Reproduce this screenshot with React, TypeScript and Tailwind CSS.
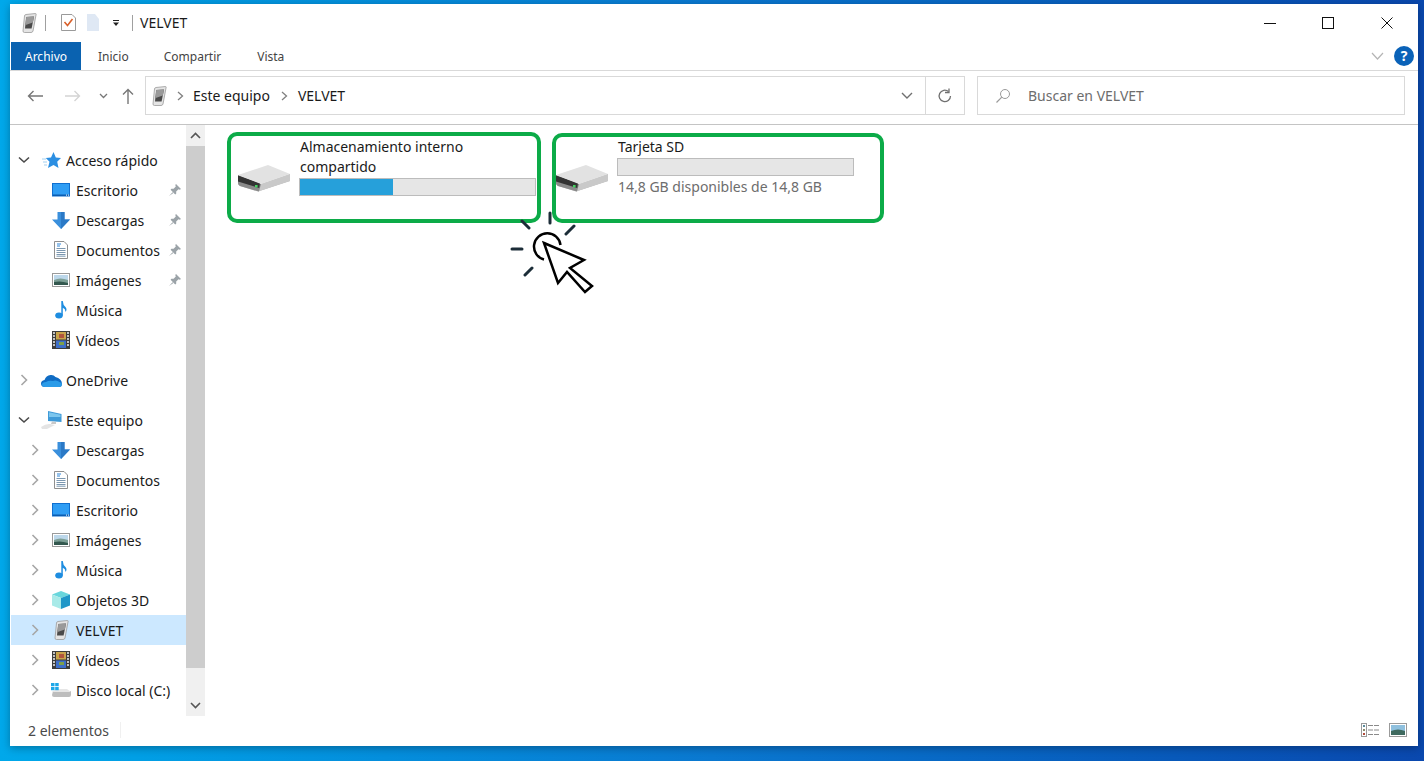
import { ReactNode } from 'react';

const font = "font-['Noto_Sans','Open_Sans',sans-serif]";

function Phone({ size = 20 }: { size?: number }) {
    return (
        <svg width={size * 0.75} height={size} viewBox="0 0 15 20">
            <path d="M4 1.5 L13.5 0.5 Q14.5 0.5 14 2 L11 18 Q10.5 19.5 9 19.5 L2.5 19.5 Q1 19.5 1 18 L2.5 3 Q2.5 1.7 4 1.5Z" fill="#e4e4e4" stroke="#9a9a9a" strokeWidth="0.8" />
            <path d="M4.2 4 L12 3.5 L9.6 15.5 L3 15.5Z" fill="#4a4a4a" />
            <path d="M4.2 4 L12 3.5 L10.8 9.5 L3.6 12Z" fill="#9a9a9a" />
        </svg>
    );
}

function DesktopIcon() {
    return (
        <svg width="18" height="14" viewBox="0 0 18 14">
            <rect x="0" y="0" width="18" height="13.5" fill="#0f6fd0" />
            <rect x="1" y="1" width="16" height="11" fill="#2f9df4" />
            <rect x="1" y="11.5" width="16" height="1.5" fill="#0b5cb0" />
            <rect x="14" y="11.6" width="1" height="1" fill="#fff" />
            <rect x="16" y="11.6" width="1" height="1" fill="#fff" />
        </svg>
    );
}

function DownloadIcon() {
    return (
        <svg width="18" height="17" viewBox="0 0 18 17">
            <path d="M5.5 0 H12.5 V7.5 H18 L9 17 L0 7.5 H5.5Z" fill="#3a8fdc" />
            <path d="M9 0 H12.5 V7.5 H18 L9 17Z" fill="#2b79c6" />
        </svg>
    );
}

function DocIcon() {
    return (
        <svg width="14" height="18" viewBox="0 0 14 18">
            <path d="M0.5 0.5 H10 L13.5 4 V17.5 H0.5Z" fill="#fff" stroke="#8f8f8f" />
            <path d="M3 3 H7 M3 5 H6" stroke="#2f86d8" strokeWidth="1" />
            <path d="M2.5 7.5 H11.5 M2.5 9.5 H11.5 M2.5 11.5 H11.5 M2.5 13.5 H11.5 M2.5 15.2 H11.5" stroke="#6d8ca8" strokeWidth="0.9" />
        </svg>
    );
}

function PictureIcon() {
    return (
        <svg width="18" height="14" viewBox="0 0 18 14">
            <rect x="0.5" y="0.5" width="17" height="13" fill="#fff" stroke="#9a9a9a" />
            <rect x="2" y="2" width="14" height="10" fill="#bcd7ea" />
            <path d="M2 7 Q8 4 16 7 V12 H2Z" fill="#7c9f96" />
            <path d="M2 9 Q9 7.5 16 10 V12 H2Z" fill="#33584f" />
        </svg>
    );
}

function MusicIcon() {
    return (
        <svg width="12" height="18" viewBox="0 0 12 18">
            <ellipse cx="4" cy="14.5" rx="3.8" ry="3" fill="#1e8de0" />
            <path d="M6.3 0 H7.8 Q8 4 10.5 6 Q12.5 8.5 10.5 11 Q10.6 8 7.8 6.8 V14.5 H6.3Z" fill="#1e8de0" />
        </svg>
    );
}

function VideoIcon() {
    return (
        <svg width="18" height="18" viewBox="0 0 18 18">
            <rect width="18" height="18" fill="#3c3c3c" />
            <rect x="4" y="1" width="10" height="7.5" fill="#c8a34a" />
            <rect x="7" y="3" width="5" height="4" fill="#b0553d" />
            <rect x="4" y="9.5" width="10" height="7.5" fill="#3e6fc9" />
            <rect x="7" y="11" width="5" height="3" fill="#7ea04a" />
            <path d="M1 2 H3 M1 5 H3 M1 8 H3 M1 11 H3 M1 14 H3 M15 2 H17 M15 5 H17 M15 8 H17 M15 11 H17 M15 14 H17" stroke="#eee" strokeWidth="1.4" />
        </svg>
    );
}

function StarIcon() {
    return (
        <svg width="19" height="17" viewBox="0 0 19 17">
            <path d="M11.5 0 L13.8 5.5 L19 6 L15.2 9.8 L16.5 16 L11.5 13 L6 16 L7.5 9.8 L3.8 6 L9 5.5Z" fill="#2c8fe2" />
            <path d="M0 7 H4 M1 10 H5 M2 13 H5" stroke="#8cc4ee" strokeWidth="0.8" />
        </svg>
    );
}

function CloudIcon() {
    return (
        <svg width="21" height="13" viewBox="0 0 21 13">
            <path d="M4 13 Q0 13 0 9.5 Q0 6.5 3.5 6 Q5 1.5 9.5 1 Q12.5 0.5 14.5 3 Q20.5 4.5 21 9.5 Q21 13 18 13Z" fill="#0f6cc4" />
            <path d="M4 13 Q1 13 1 10.5 Q1 8 5 8 Q8 6 12 7 Q15 5 21 9.5 Q21 13 18 13Z" fill="#2a9be8" />
        </svg>
    );
}

function PcIcon() {
    return (
        <svg width="21" height="18" viewBox="0 0 21 18">
            <path d="M7 0 L20.5 3 V11 L7 10Z" fill="#3f9ad8" />
            <path d="M8 1.2 L19.5 3.8 V6 L8 6Z" fill="#7cc6ee" />
            <path d="M11 10.5 L15 11 L15 13 L10 13Z" fill="#c9c9c9" />
            <path d="M0 16 Q5 12.5 9 13 L14 14 L6 18 L1 18Z" fill="#e4e4e4" />
        </svg>
    );
}

function CubeIcon() {
    return (
        <svg width="18" height="18" viewBox="0 0 18 18">
            <path d="M9 0 L18 3.5 L9 7 L0 3.5Z" fill="#69d6dc" />
            <path d="M0 3.5 L9 7 V18 L0 14.5Z" fill="#a8eae8" />
            <path d="M18 3.5 L9 7 V18 L18 14.5Z" fill="#1f97c8" />
        </svg>
    );
}

function LocalDiskIcon() {
    return (
        <svg width="20" height="14" viewBox="0 0 20 14">
            <path d="M2 8 L20 8 V12 Q20 14 18 14 H3 Q1 14 1 12Z" fill="#bdbdbd" />
            <path d="M5 6 H16 L20 9 H1Z" fill="#e6e6e6" />
            <rect x="0" y="0" width="3.5" height="3.2" fill="#1ea7e8" />
            <rect x="4.2" y="0" width="3.5" height="3.2" fill="#1ea7e8" />
            <rect x="0" y="4" width="3.5" height="3.2" fill="#1ea7e8" />
            <rect x="4.2" y="4" width="3.5" height="3.2" fill="#1ea7e8" />
        </svg>
    );
}

function Pin() {
    return (
        <svg width="12" height="12" viewBox="0 0 12 12">
            <path d="M7 0 L12 5 L10.8 5.8 L9.5 5.3 L7.2 7.6 L7.2 9.8 L6.2 10.6 L1.6 5.8 L2.4 4.8 L4.6 4.8 L6.8 2.5 L6.3 1Z" fill="#9ba3a8" />
            <path d="M3.6 8.2 L0 12 L4.4 9Z" fill="#9ba3a8" />
        </svg>
    );
}

function Chevron({ open }: { open?: boolean }) {
    return open ? (
        <svg width="12" height="8" viewBox="0 0 12 8"><path d="M1 1.5 L6 6 L11 1.5" fill="none" stroke="#4a4a4a" strokeWidth="1.6" /></svg>
    ) : (
        <svg width="8" height="12" viewBox="0 0 8 12"><path d="M1.5 1 L6.5 6 L1.5 11" fill="none" stroke="#a6a6a6" strokeWidth="1.6" /></svg>
    );
}

function DriveIcon() {
    return (
        <svg width="52" height="27" viewBox="0 0 52 27" className="shrink-0">
            <path d="M0 10 L23 19 L52 9 V16 L20 26.5 L2 21 Q0 20 0 18Z" fill="#b9b9b9" />
            <path d="M23 19 L52 9 V16 L20 26.5Z" fill="#c9c9c9" />
            <path d="M0 10 L23 19 L21 26.5 L2 21 Q0 20 0 18Z" fill="#8a8a8a" />
            <path d="M0 10.5 L22 18 L21.2 23 L0 16.5Z" fill="#333" />
            <path d="M0 10 L30 0 L52 9 L23 19Z" fill="#e2e2e2" />
            <rect x="17" y="20" width="2.6" height="2.4" fill="#45d160" />
        </svg>
    );
}

type NavItem = { label: string; icon: ReactNode; pin?: boolean; sel?: boolean };

const quick: NavItem[] = [
    { label: 'Escritorio', icon: <DesktopIcon />, pin: true },
    { label: 'Descargas', icon: <DownloadIcon />, pin: true },
    { label: 'Documentos', icon: <DocIcon />, pin: true },
    { label: 'Imágenes', icon: <PictureIcon />, pin: true },
    { label: 'Música', icon: <MusicIcon /> },
    { label: 'Vídeos', icon: <VideoIcon /> },
];

const pc: NavItem[] = [
    { label: 'Descargas', icon: <DownloadIcon /> },
    { label: 'Documentos', icon: <DocIcon /> },
    { label: 'Escritorio', icon: <DesktopIcon /> },
    { label: 'Imágenes', icon: <PictureIcon /> },
    { label: 'Música', icon: <MusicIcon /> },
    { label: 'Objetos 3D', icon: <CubeIcon /> },
    { label: 'VELVET', icon: <Phone size={20} />, sel: true },
    { label: 'Vídeos', icon: <VideoIcon /> },
    { label: 'Disco local (C:)', icon: <LocalDiskIcon /> },
];

function TopRow({ label, icon, open }: { label: string; icon: ReactNode; open?: boolean }) {
    return (
        <div className="flex h-[30px] items-center">
            <div className="flex w-[26px] justify-center">
                <Chevron open={open} />
            </div>
            <div className="ml-[3px] flex w-[22px] justify-center">{icon}</div>
            <span className="ml-[4px] text-[14px] text-[#1a1a1a]">{label}</span>
        </div>
    );
}

function ChildRow({ item, chevron }: { item: NavItem; chevron?: boolean }) {
    return (
        <div className={`flex h-[30px] items-center ${item.sel ? 'bg-[#cce8ff]' : ''}`}>
            <div className="ml-[11px] flex w-[26px] justify-center">{chevron && <Chevron />}</div>
            <div className="ml-[2px] flex w-[22px] justify-center">{item.icon}</div>
            <span className="ml-[4px] flex-1 text-[14px] text-[#1a1a1a]">{item.label}</span>
            {item.pin && (
                <div className="mr-[5px]">
                    <Pin />
                </div>
            )}
        </div>
    );
}

function Bar({ pct }: { pct: number }) {
    return (
        <div className="h-[18px] w-[237px] border border-[#bcbcbc] bg-[#e6e6e6]">
            {pct > 0 && <div className="h-full bg-[#26a0da]" style={{ width: `${pct}%` }} />}
        </div>
    );
}

export default function App() {
    return (
        <div className={`h-[761px] w-[1424px] overflow-hidden bg-gradient-to-r from-[#00a8ea] via-[#0a78d0] to-[#0a48ae] pl-[10px] pt-[4px] ${font}`}>
            <div className="relative flex h-[742px] w-[1408px] flex-col bg-white shadow-[0_2px_8px_rgba(0,0,0,0.3)]">
                {/* titulo */}
                <div className="flex h-[37px] items-center">
                    <div className="ml-[12px]"><Phone size={20} /></div>
                    <div className="ml-[8px] h-[16px] w-px bg-[#a0a0a0]" />
                    <svg width="15" height="17" viewBox="0 0 15 17" className="ml-[15px]">
                        <path d="M0.5 0.5 H11 L14.5 4 V16.5 H0.5Z" fill="#fff" stroke="#9a9a9a" />
                        <path d="M3.5 8 L6.5 11.5 L11.5 5" fill="none" stroke="#d9602a" strokeWidth="1.6" />
                    </svg>
                    <svg width="12" height="17" viewBox="0 0 12 17" className="ml-[11px]">
                        <path d="M0 0 H8 L12 5 V17 H0Z" fill="#dfe8f4" />
                    </svg>
                    <svg width="8" height="6" viewBox="0 0 8 6" className="ml-[13px]">
                        <path d="M1 0.5 H7" stroke="#222" />
                        <path d="M1 2.5 H7 L4 6Z" fill="#222" />
                    </svg>
                    <div className="ml-[12px] h-[16px] w-px bg-[#a0a0a0]" />
                    <span className="ml-[7px] text-[14px] text-[#1a1a1a]">VELVET</span>
                    <div className="ml-auto flex items-center">
                        <svg width="12" height="12" viewBox="0 0 12 12"><path d="M0 6.5 H12" stroke="#111" /></svg>
                        <svg width="12" height="12" viewBox="0 0 12 12" className="ml-[46px]"><rect x="0.5" y="0.5" width="11" height="11" fill="none" stroke="#111" /></svg>
                        <svg width="12" height="12" viewBox="0 0 12 12" className="ml-[47px] mr-[25px]"><path d="M0.5 0.5 L11.5 11.5 M11.5 0.5 L0.5 11.5" stroke="#111" /></svg>
                    </div>
                </div>

                {/* cinta */}
                <div className="flex h-[30px] items-stretch border-b border-[#d9d9d9] pl-px text-[12px] text-[#444]">
                    <div className="mt-px flex w-[70px] items-center justify-center bg-[#0a62b0] pt-px text-white">Archivo</div>
                    <div className="ml-[17px] flex items-center pt-[2px]">Inicio</div>
                    <div className="ml-[35px] flex items-center pt-[2px]">Compartir</div>
                    <div className="ml-[36px] flex items-center pt-[2px]">Vista</div>
                    <div className="ml-auto flex items-center">
                        <svg width="13" height="8" viewBox="0 0 13 8"><path d="M1 1 L6.5 7 L12 1" fill="none" stroke="#b5b5b5" strokeWidth="1.2" /></svg>
                        <div className="ml-[10px] mr-[4px] flex h-[20px] w-[20px] items-center justify-center rounded-full bg-[#0a62b8] text-[14px] font-bold text-white">?</div>
                    </div>
                </div>

                {/* direccion */}
                <div className="flex h-[54px] items-center border-b border-[#c4c4c4] pb-[4px]">
                    <svg width="16" height="12" viewBox="0 0 16 12" className="ml-[17px]"><path d="M16 6 H1.5 M6.5 1 L1.5 6 L6.5 11" fill="none" stroke="#777" strokeWidth="1.4" /></svg>
                    <svg width="16" height="12" viewBox="0 0 16 12" className="ml-[22px]"><path d="M0 6 H14.5 M9.5 1 L14.5 6 L9.5 11" fill="none" stroke="#d4d4d4" strokeWidth="1.4" /></svg>
                    <svg width="9" height="6" viewBox="0 0 9 6" className="ml-[18px]"><path d="M1 1 L4.5 4.5 L8 1" fill="none" stroke="#777" strokeWidth="1.3" /></svg>
                    <svg width="12" height="16" viewBox="0 0 12 16" className="ml-[14px]"><path d="M6 16 V1.5 M1 6.5 L6 1.5 L11 6.5" fill="none" stroke="#777" strokeWidth="1.4" /></svg>
                    <div className="ml-[11px] flex h-[39px] w-[820px] items-center border border-[#d9d9d9]">
                        <div className="ml-[6px]"><Phone size={20} /></div>
                        <svg width="7" height="10" viewBox="0 0 7 10" className="ml-[10px]"><path d="M1 1 L5.5 5 L1 9" fill="none" stroke="#808080" strokeWidth="1.3" /></svg>
                        <span className="ml-[9px] text-[14px] text-[#1a1a1a]">Este equipo</span>
                        <svg width="7" height="10" viewBox="0 0 7 10" className="ml-[11px]"><path d="M1 1 L5.5 5 L1 9" fill="none" stroke="#808080" strokeWidth="1.3" /></svg>
                        <span className="ml-[10px] text-[14px] text-[#1a1a1a]">VELVET</span>
                        <svg width="12" height="7" viewBox="0 0 12 7" className="ml-auto mr-[12px]"><path d="M1 1 L6 6 L11 1" fill="none" stroke="#707070" strokeWidth="1.4" /></svg>
                        <div className="h-full w-px bg-[#d9d9d9]" />
                        <svg width="16" height="16" viewBox="0 0 16 16" className="mx-[11px]">
                            <path d="M13.5 8 A5.7 5.7 0 1 1 11.5 3.6" fill="none" stroke="#707070" strokeWidth="1.3" />
                            <path d="M12 0.5 V4.5 H8" fill="none" stroke="#707070" strokeWidth="1.3" />
                        </svg>
                    </div>
                    <div className="ml-[12px] flex h-[39px] w-[428px] items-center border border-[#d9d9d9]">
                        <svg width="16" height="16" viewBox="0 0 16 16" className="ml-[17px]">
                            <circle cx="10" cy="6" r="4.5" fill="none" stroke="#9a9a9a" />
                            <path d="M6.8 9.2 L1.5 14.5" stroke="#9a9a9a" strokeWidth="1.2" />
                        </svg>
                        <span className="ml-[17px] text-[14px] text-[#6d6d6d]">Buscar en VELVET</span>
                    </div>
                </div>

                {/* cuerpo */}
                <div className="flex min-h-0 flex-1">
                    <div className="flex w-[195px] shrink-0">
                        <div className="w-[176px] pl-px pt-[20px]">
                            <TopRow label="Acceso rápido" icon={<StarIcon />} open />
                            {quick.map(item => (
                                <ChildRow key={item.label} item={item} />
                            ))}
                            <div className="h-[10px]" />
                            <TopRow label="OneDrive" icon={<CloudIcon />} />
                            <div className="h-[10px]" />
                            <TopRow label="Este equipo" icon={<PcIcon />} open />
                            {pc.map(item => (
                                <ChildRow key={item.label} item={item} chevron />
                            ))}
                        </div>
                        <div className="flex h-[591px] w-[19px] flex-col bg-[#f0f0f0]">
                            <div className="flex h-[21px] items-center justify-center">
                                <svg width="11" height="7" viewBox="0 0 11 7"><path d="M1 6 L5.5 1.5 L10 6" fill="none" stroke="#555" strokeWidth="1.6" /></svg>
                            </div>
                            <div className="h-[522px] bg-[#cdcdcd]" />
                            <div className="mt-auto flex h-[21px] items-center justify-center">
                                <svg width="11" height="7" viewBox="0 0 11 7"><path d="M1 1 L5.5 5.5 L10 1" fill="none" stroke="#555" strokeWidth="1.6" /></svg>
                            </div>
                        </div>
                    </div>

                    <div className="flex flex-1 items-start gap-[11px] pl-[22px] pt-[7px]">
                        <div className="flex h-[91px] w-[314px] rounded-[10px] border-[4px] border-[#0cab48] pl-[7px]">
                            <div className="mt-[29px]"><DriveIcon /></div>
                            <div className="ml-[9px] text-[14px] leading-[21px] text-[#1a1a1a]">
                                <div className="pl-px">Almacenamiento interno</div>
                                <div className="-mt-px pl-px">compartido</div>
                                <div className="mt-px"><Bar pct={39.5} /></div>
                            </div>
                        </div>
                        <div className="mt-px flex h-[90px] w-[332px] rounded-[10px] border-[4px] border-[#0cab48]">
                            <div className="mt-[28px]"><DriveIcon /></div>
                            <div className="ml-[9px] text-[14px] leading-[21px] text-[#1a1a1a]">
                                <div className="-mt-px pl-px">Tarjeta SD</div>
                                <div className="mt-px"><Bar pct={0} /></div>
                                <div className="pl-px text-[#6d6d6d]">14,8 GB disponibles de 14,8 GB</div>
                            </div>
                        </div>
                    </div>
                </div>

                {/* estado */}
                <div className="flex h-[28px] items-center pb-[4px] text-[14px] text-[#4a4a4a]">
                    <span className="ml-[18px]">2 elementos</span>
                    <div className="ml-[11px] h-[16px] w-px bg-[#f0f0f0]" />
                    <svg width="19" height="14" viewBox="0 0 19 14" className="ml-auto">
                        <rect x="0.5" y="0.5" width="5" height="13" fill="#fff" stroke="#9a9a9a" />
                        <rect x="2" y="2" width="2" height="2" fill="#5a8a9a" />
                        <rect x="2" y="6" width="2" height="2" fill="#8a8a6a" />
                        <rect x="2" y="10" width="2" height="2" fill="#b04a3a" />
                        <path d="M7 2.5 H18 M7 7 H18 M7 11.5 H18" stroke="#8a8a8a" strokeDasharray="5 1" />
                    </svg>
                    <svg width="18" height="14" viewBox="0 0 18 14" className="ml-[9px] mr-[11px]">
                        <rect x="0.5" y="0.5" width="17" height="13" fill="#fff" stroke="#9a9a9a" />
                        <rect x="2" y="2" width="14" height="10" fill="#8fc0de" />
                        <path d="M2 8 Q9 5 16 8 V12 H2Z" fill="#3f6a5f" />
                    </svg>
                </div>

                {/* cursor de la anotacion */}
                <svg width="100" height="90" viewBox="500 207 100 90" className="pointer-events-none absolute left-[490px] top-[203px]">
                    <g stroke="#1c2d38" strokeWidth="3" strokeLinecap="round">
                        <path d="M550 213 V223 M566 234 L574 226 M522 221 L529 228 M512 249 H522 M525 275 L532 268" />
                    </g>
                    <path d="M544 259.5 A13.3 13.3 0 1 1 560.5 245" fill="none" stroke="#000" strokeWidth="2.5" />
                    <path d="M544 243 L584 260 L570 268 L592 286 L585 292 L567 272 L558 283Z" fill="#fff" stroke="#000" strokeWidth="2.5" strokeLinejoin="miter" />
                </svg>
            </div>
        </div>
    );
}
